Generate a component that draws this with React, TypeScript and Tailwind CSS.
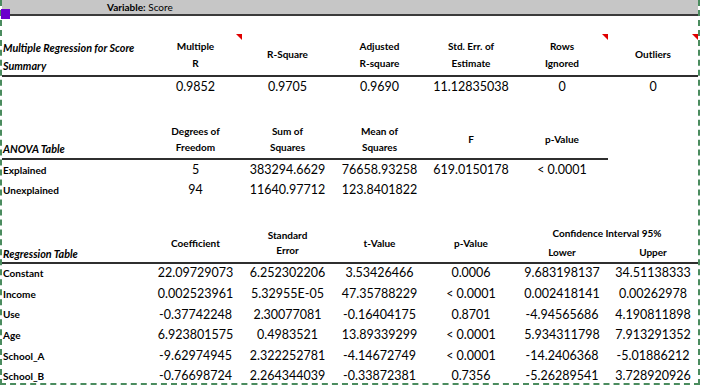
import React from "react";

const cols = "grid grid-cols-[147px_93px_91px_93px_90px_92px_90px]";

const summaryHeads = [["Multiple", "R"], ["R-Square"], ["Adjusted", "R-square"], ["Std. Err. of", "Estimate"], ["Rows", "Ignored"], ["Outliers"]];
const summaryVals = ["0.9852", "0.9705", "0.9690", "11.12835038", "0", "0"];
// celdas con indicador de comentario (triángulo rojo)
const flagged = [0, 4, 5];

const anovaHeads = [["Degrees of", "Freedom"], ["Sum of", "Squares"], ["Mean of", "Squares"], ["F"], ["p-Value"]];
const anovaRows = [
  ["Explained", "5", "383294.6629", "76658.93258", "619.0150178", "< 0.0001"],
  ["Unexplained", "94", "11640.97712", "123.8401822", "", ""],
];

const regRows = [
  ["Constant", "22.09729073", "6.252302206", "3.53426466", "0.0006", "9.683198137", "34.51138333"],
  ["Income", "0.002523961", "5.32955E-05", "47.35788229", "< 0.0001", "0.002418141", "0.00262978"],
  ["Use", "-0.37742248", "2.30077081", "-0.16404175", "0.8701", "-4.94565686", "4.190811898"],
  ["Age", "6.923801575", "0.4983521", "13.89339299", "< 0.0001", "5.934311798", "7.913291352"],
  ["School_A", "-9.62974945", "2.322252781", "-4.14672749", "< 0.0001", "-14.2406368", "-5.01886212"],
  ["School_B", "-0.76698724", "2.264344039", "-0.33872381", "0.7356", "-5.26289541", "3.728920926"],
];

function Head({ lines, leading = "leading-[16px]" }: { lines: string[]; leading?: string }) {
  return (
    <div className={`flex flex-col items-center justify-center text-center font-bold text-[10px] ${leading}`}>
      {lines.map((l) => (
        <div key={l}>{l}</div>
      ))}
    </div>
  );
}

export default function App() {
  return (
    <div className="relative w-[703px] h-[386px] bg-white overflow-hidden text-black" style={{ fontFamily: "Lato, 'Open Sans', sans-serif" }}>
      <div className="w-[700px] h-[385px] border-l-2 border-r-2 border-b-2 border-dashed border-[#4a8c5e] overflow-hidden">
        {/* --- BANDA SUPERIOR --- */}
        <div className="h-[16px] bg-[#c6c6c6] border-b-2 border-[#3b3b3b] pl-[105px] text-[10px] leading-[14px]">
          <span className="font-bold">Variable:</span> Score
        </div>

        {/* --- RESUMEN --- */}
        <div className={`${cols} mt-[18px] h-[43px] border-b-2 border-[#2f2f2f]`}>
          <div className="flex flex-col justify-end pl-[1px] pb-[1px] font-bold italic text-[10.8px] whitespace-nowrap">
            <div className="leading-[20px]">Multiple Regression for Score</div>
            <div className="leading-[16px]">Summary</div>
          </div>
          {summaryHeads.map((h, i) => (
            <div key={i} className="relative flex items-center justify-center">
              <Head lines={h} leading="leading-[17px]" />
              {flagged.includes(i) && (
                <span className="absolute top-0 right-0 w-0 h-0 border-l-[6px] border-l-transparent border-t-[6px] border-t-[#e00000]" />
              )}
            </div>
          ))}
        </div>
        <div className={`${cols} h-[21px] items-center text-[12.5px]`}>
          <div />
          {summaryVals.map((v, i) => (
            <div key={i} className="text-center">{v}</div>
          ))}
        </div>

        {/* --- TABLA ANOVA --- */}
        <div className={`${cols} mt-[22px] h-[40px] w-[606px] border-b-2 border-[#2f2f2f]`}>
          <div className="self-end pl-[1px] pb-[2px] font-bold italic text-[10.8px] leading-[14px]">ANOVA Table</div>
          {anovaHeads.map((h, i) => (
            <Head key={i} lines={h} />
          ))}
        </div>
        {anovaRows.map((r) => (
          <div key={r[0]} className={`${cols} h-[20.5px] items-center text-[12.5px]`}>
            <div className="pl-[1px] font-bold text-[10px]">{r[0]}</div>
            {r.slice(1).map((v, i) => (
              <div key={i} className="text-center">{v}</div>
            ))}
          </div>
        ))}

        {/* --- TABLA DE REGRESIÓN --- */}
        <div className={`${cols} grid-rows-[20px_18px] mt-[22.5px] h-[40px] border-b-2 border-[#2f2f2f]`}>
          <div className="row-span-2 self-end pl-[1px] pb-[1px] font-bold italic text-[10.8px] leading-[14px]">Regression Table</div>
          <div className="row-span-2 flex"><div className="m-auto"><Head lines={["Coefficient"]} /></div></div>
          <div className="row-span-2 flex"><div className="m-auto"><Head lines={["Standard", "Error"]} leading="leading-[15px]" /></div></div>
          <div className="row-span-2 flex"><div className="m-auto"><Head lines={["t-Value"]} /></div></div>
          <div className="row-span-2 flex"><div className="m-auto"><Head lines={["p-Value"]} /></div></div>
          <div className="col-span-2 flex items-center justify-center font-bold text-[10px]">Confidence Interval 95%</div>
          <div className="flex items-center justify-center font-bold text-[10px]">Lower</div>
          <div className="flex items-center justify-center font-bold text-[10px]">Upper</div>
        </div>
        {regRows.map((r) => (
          <div key={r[0]} className={`${cols} h-[20.6px] items-center text-[12.5px]`}>
            <div className="pl-[1px] font-bold text-[10px]">{r[0]}</div>
            {r.slice(1).map((v, i) => (
              <div key={i} className="text-center">{v}</div>
            ))}
          </div>
        ))}
      </div>
      <div className="absolute left-[1px] top-[9px] w-[9px] h-[10px] bg-[#6b00cc]" />
    </div>
  );
}
